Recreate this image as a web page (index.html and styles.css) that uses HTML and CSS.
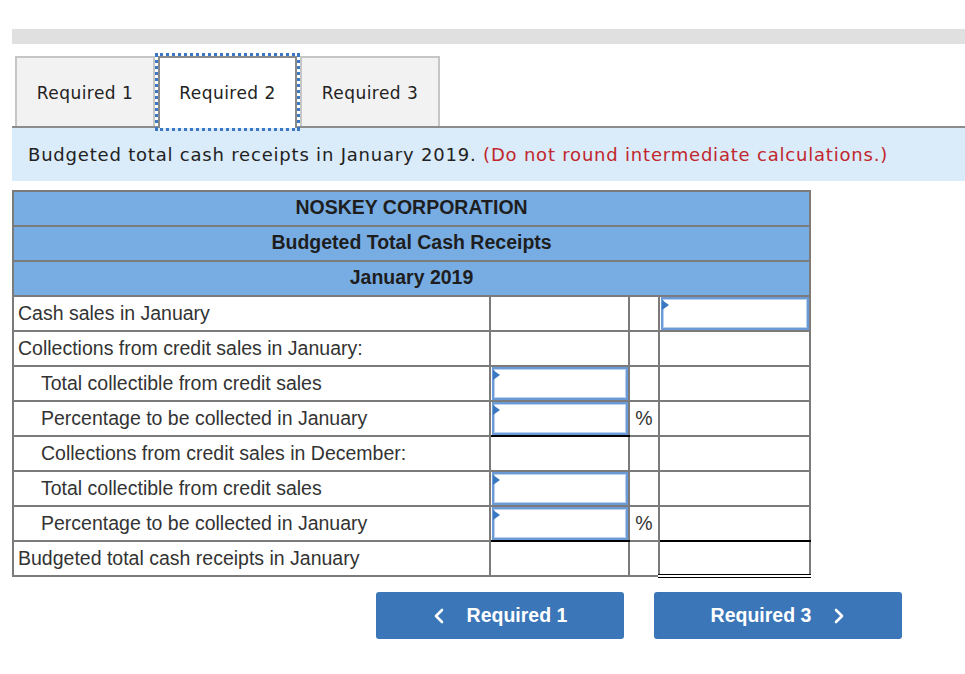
FILE: index.html
```html
<!DOCTYPE html>
<html>
<head>
<meta charset="utf-8">
<link rel="stylesheet" href="styles.css">
</head>
<body>
<div class="page">
  <div class="topbar"></div>
  <div class="tabs">
    <div class="tab">Required 1</div>
    <div class="tab active">Required 2</div>
    <div class="tab">Required 3</div>
  </div>
  <div class="instr">Budgeted total cash receipts in January 2019. <span class="red">(Do not round intermediate calculations.)</span></div>
  <table class="sheet">
    <colgroup>
      <col class="c1"><col class="c2"><col class="c3"><col class="c4">
    </colgroup>
    <tr class="head"><th colspan="4">NOSKEY CORPORATION</th></tr>
    <tr class="head"><th colspan="4">Budgeted Total Cash Receipts</th></tr>
    <tr class="head"><th colspan="4">January 2019</th></tr>
    <tr>
      <td class="lbl">Cash sales in January</td>
      <td></td><td></td>
      <td class="cin"><div class="inp"></div></td>
    </tr>
    <tr>
      <td class="lbl">Collections from credit sales in January:</td>
      <td></td><td></td><td></td>
    </tr>
    <tr>
      <td class="lbl ind">Total collectible from credit sales</td>
      <td class="cin"><div class="inp"></div></td><td></td><td></td>
    </tr>
    <tr>
      <td class="lbl ind">Percentage to be collected in January</td>
      <td class="cin under"><div class="inp"></div></td><td class="pct">%</td><td></td>
    </tr>
    <tr>
      <td class="lbl ind">Collections from credit sales in December:</td>
      <td></td><td></td><td></td>
    </tr>
    <tr>
      <td class="lbl ind">Total collectible from credit sales</td>
      <td class="cin"><div class="inp"></div></td><td></td><td></td>
    </tr>
    <tr>
      <td class="lbl ind">Percentage to be collected in January</td>
      <td class="cin under"><div class="inp"></div></td><td class="pct">%</td><td class="under"></td>
    </tr>
    <tr>
      <td class="lbl">Budgeted total cash receipts in January</td>
      <td></td><td></td><td class="dbl"></td>
    </tr>
  </table>
  <div class="navs">
    <button class="nav">
      <svg class="chev" width="12" height="18" viewBox="0 0 12 18"><path d="M9 3 L3 9 L9 15" fill="none" stroke="#fff" stroke-width="2.6" stroke-linecap="round" stroke-linejoin="round"/></svg>
      <span>Required 1</span>
    </button>
    <button class="nav">
      <span>Required 3</span>
      <svg class="chev" width="12" height="18" viewBox="0 0 12 18"><path d="M3 3 L9 9 L3 15" fill="none" stroke="#fff" stroke-width="2.6" stroke-linecap="round" stroke-linejoin="round"/></svg>
    </button>
  </div>
</div>
</body>
</html>
```
FILE: styles.css
```css
html, body {
  margin: 0;
  padding: 0;
  background: #fff;
}
.page {
  padding: 29px 0 0 12px;
  font-family: "Liberation Sans", Arial, sans-serif;
}
.topbar {
  height: 15px;
  background: #e0e0e0;
}
.tabs {
  display: flex;
  gap: 3px;
  margin-top: 12px;
  padding-left: 3px;
  border-bottom: 2px solid #8c8c8c;
  height: 70px;
  align-items: stretch;
}
.tab {
  box-sizing: border-box;
  width: 140px;
  border: 2px solid #c6c6c6;
  border-bottom: none;
  background: #f2f2f2;
  font-family: "DejaVu Sans", Verdana, sans-serif;
  font-size: 17px;
  letter-spacing: 0.45px;
  color: #222;
  display: flex;
  align-items: center;
  justify-content: center;
  padding-top: 1px;
}
.tab.active {
  width: 139px;
  background: #fff;
  border-color: #8a8a8a;
  margin-bottom: -2px;
  padding-bottom: 2px;
  outline: 3px dotted #3d78c4;
  outline-offset: 0;
  position: relative;
}
.instr {
  height: 53px;
  background: #daebf9;
  display: flex;
  align-items: center;
  padding-left: 16px;
  font-family: "DejaVu Sans", Verdana, sans-serif;
  font-size: 18px;
  letter-spacing: 0.8px;
  color: #222;
  white-space: pre;
}
.red {
  color: #c1272d;
}
.sheet {
  margin-top: 9px;
  border-collapse: collapse;
  table-layout: fixed;
  width: 798px;
  font-size: 19.5px;
  color: #333;
}
.c1 { width: 477px; }
.c2 { width: 139px; }
.c3 { width: 30px; }
.c4 { width: 151px; }
.sheet td, .sheet th {
  border: 2px solid #7b7b7b;
  height: 35px;
  padding: 0;
  box-sizing: border-box;
}
.head th {
  background: #78ade3;
  color: #1e1e1e;
  font-weight: bold;
  text-align: center;
  padding-bottom: 2px;
}
.lbl {
  padding-left: 4px !important;
  padding-bottom: 1px !important;
}
.lbl.ind {
  padding-left: 27px !important;
}
.pct {
  text-align: center;
}
.cin {
  position: relative;
}
.inp {
  position: relative;
  box-sizing: border-box;
  height: 33px;
  margin: 0 0 0 1px;
  border: 2px solid #6a9bd6;
  box-shadow: inset 0 0 0 1px #b9d0ee;
  background: #fff;
}
.inp::before {
  content: "";
  position: absolute;
  left: -1px;
  top: 1px;
  border-top: 5px solid transparent;
  border-bottom: 5px solid transparent;
  border-left: 7px solid #3a78c2;
}
.sheet td.under {
  border-bottom: 2px solid #000;
}
.sheet td.dbl {
  border-bottom: 4px double #000;
}
.navs {
  display: flex;
  gap: 30px;
  padding-left: 364px;
  margin-top: 14px;
}
.nav {
  width: 248px;
  height: 47px;
  border: none;
  border-radius: 3px;
  background: #3b76b9;
  color: #fff;
  font-family: "Liberation Sans", Arial, sans-serif;
  font-weight: bold;
  font-size: 19.5px;
  display: flex;
  align-items: center;
  justify-content: center;
  gap: 22px;
  padding: 0;
}
.chev {
  display: block;
}
```
